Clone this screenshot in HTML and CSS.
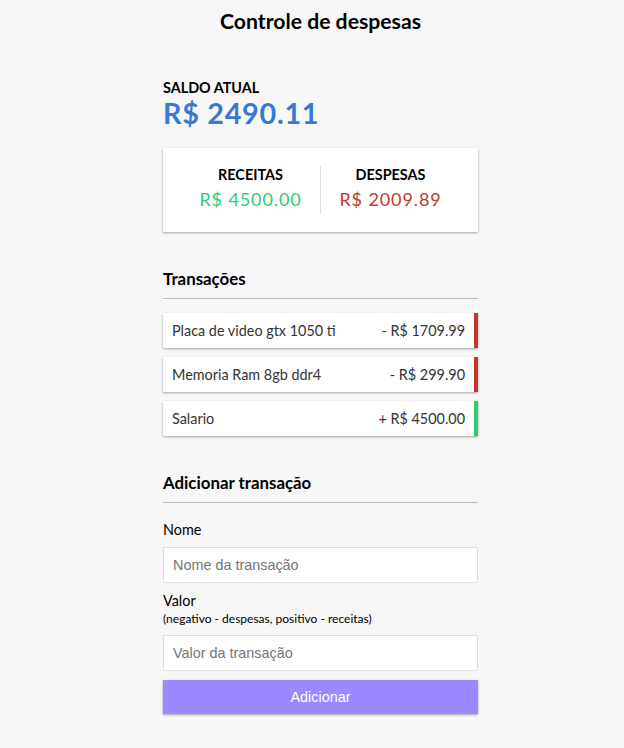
FILE: index.html
```html
<!DOCTYPE html>
<html lang="pt-BR">
<head>
<meta charset="utf-8">
<title>Controle de despesas</title>
<link rel="stylesheet" href="styles.css">
</head>
<body>
<div class="app">
  <h2 class="title">Controle de despesas</h2>
  <div class="container">
    <h4 class="caps">Saldo atual</h4>
    <h1 class="balance">R$ 2490.11</h1>

    <div class="inc-exp">
      <div class="inc-exp-col">
        <h4 class="caps">Receitas</h4>
        <p class="money plus">R$ 4500.00</p>
      </div>
      <div class="inc-exp-col">
        <h4 class="caps">Despesas</h4>
        <p class="money minus">R$ 2009.89</p>
      </div>
    </div>

    <h3 class="section">Transações</h3>
    <ul class="list">
      <li class="item minus"><span>Placa de video gtx 1050 ti</span><span>- R$ 1709.99</span></li>
      <li class="item minus"><span>Memoria Ram 8gb ddr4</span><span>- R$ 299.90</span></li>
      <li class="item plus"><span>Salario</span><span>+ R$ 4500.00</span></li>
    </ul>

    <h3 class="section">Adicionar transação</h3>
    <form class="form">
      <div class="field">
        <label class="label" for="text">Nome</label>
        <input class="input" type="text" id="text" placeholder="Nome da transação">
      </div>
      <div class="field">
        <label class="label" for="amount">Valor <br><small class="hint">(negativo - despesas, positivo - receitas)</small></label>
        <input class="input" type="number" id="amount" placeholder="Valor da transação">
      </div>
      <button class="btn" type="button">Adicionar</button>
    </form>
  </div>
</div>
</body>
</html>
```

FILE: styles.css
```css
* { box-sizing: border-box; }

body {
  margin: 0;
  background-color: #f7f7f7;
  font-family: "Lato", "Open Sans", sans-serif;
  font-size: 14.4px;
  color: #000;
}

.app {
  display: flex;
  flex-direction: column;
  align-items: center;
  padding: 8px 0 0 17px;
}

.title {
  font-size: 21.2px;
  margin: 0 0 18px;
  font-weight: 700;
}

.container {
  width: 315px;
  margin: 27px 0;
}

.caps {
  margin: 0;
  font-size: 14.4px;
  text-transform: uppercase;
  font-weight: 700;
}

.balance {
  margin: 0;
  font-size: 28.8px;
  letter-spacing: 0.7px;
  color: #3a78d6;
  font-weight: 700;
}

.inc-exp {
  background-color: #fff;
  box-shadow: 0 1px 3px rgba(0,0,0,0.12), 0 1px 2px rgba(0,0,0,0.24);
  padding: 18px;
  display: flex;
  justify-content: space-between;
  margin: 18px 0;
}

.inc-exp-col {
  flex: 1;
  text-align: center;
}

.inc-exp-col:first-child {
  border-right: 1px solid #dedede;
}

.money {
  font-size: 18px;
  letter-spacing: 0.9px;
  margin: 4.5px 0;
}

.money.plus { color: #2ecc71; }
.money.minus { color: #c0392b; }

.section {
  font-size: 16.85px;
  font-weight: 700;
  border-bottom: 1px solid #bbb;
  padding-bottom: 9px;
  margin: 36px 0 9px;
}

.list {
  list-style-type: none;
  padding: 0;
  margin: 14.4px 0 36px;
}

.item {
  background-color: #fff;
  box-shadow: 0 1px 3px rgba(0,0,0,0.12), 0 1px 2px rgba(0,0,0,0.24);
  color: #333;
  display: flex;
  justify-content: space-between;
  padding: 9px;
  margin: 9px 0;
}

.item.plus { border-right: 4.5px solid #2ecc71; }
.item.minus { border-right: 4.5px solid #c0392b; }

.form { margin: 0; }

.label {
  display: inline-block;
  margin: 9px 0;
}

.hint { font-size: 12px; }

.input {
  display: block;
  width: 100%;
  border: 1px solid #dedede;
  border-radius: 2px;
  font-family: "Liberation Sans", Arial, sans-serif;
  font-size: 14.4px;
  padding: 9px;
  background: #fff;
  color: #333;
}

.input::placeholder { color: #757575; }

.btn {
  display: block;
  width: 100%;
  cursor: pointer;
  background-color: #9c88ff;
  box-shadow: 0 1px 3px rgba(0,0,0,0.12), 0 1px 2px rgba(0,0,0,0.24);
  color: #fff;
  border: 0;
  font-family: "Liberation Sans", Arial, sans-serif;
  font-size: 14.4px;
  margin: 9px 0 27px;
  padding: 9px;
}
```
